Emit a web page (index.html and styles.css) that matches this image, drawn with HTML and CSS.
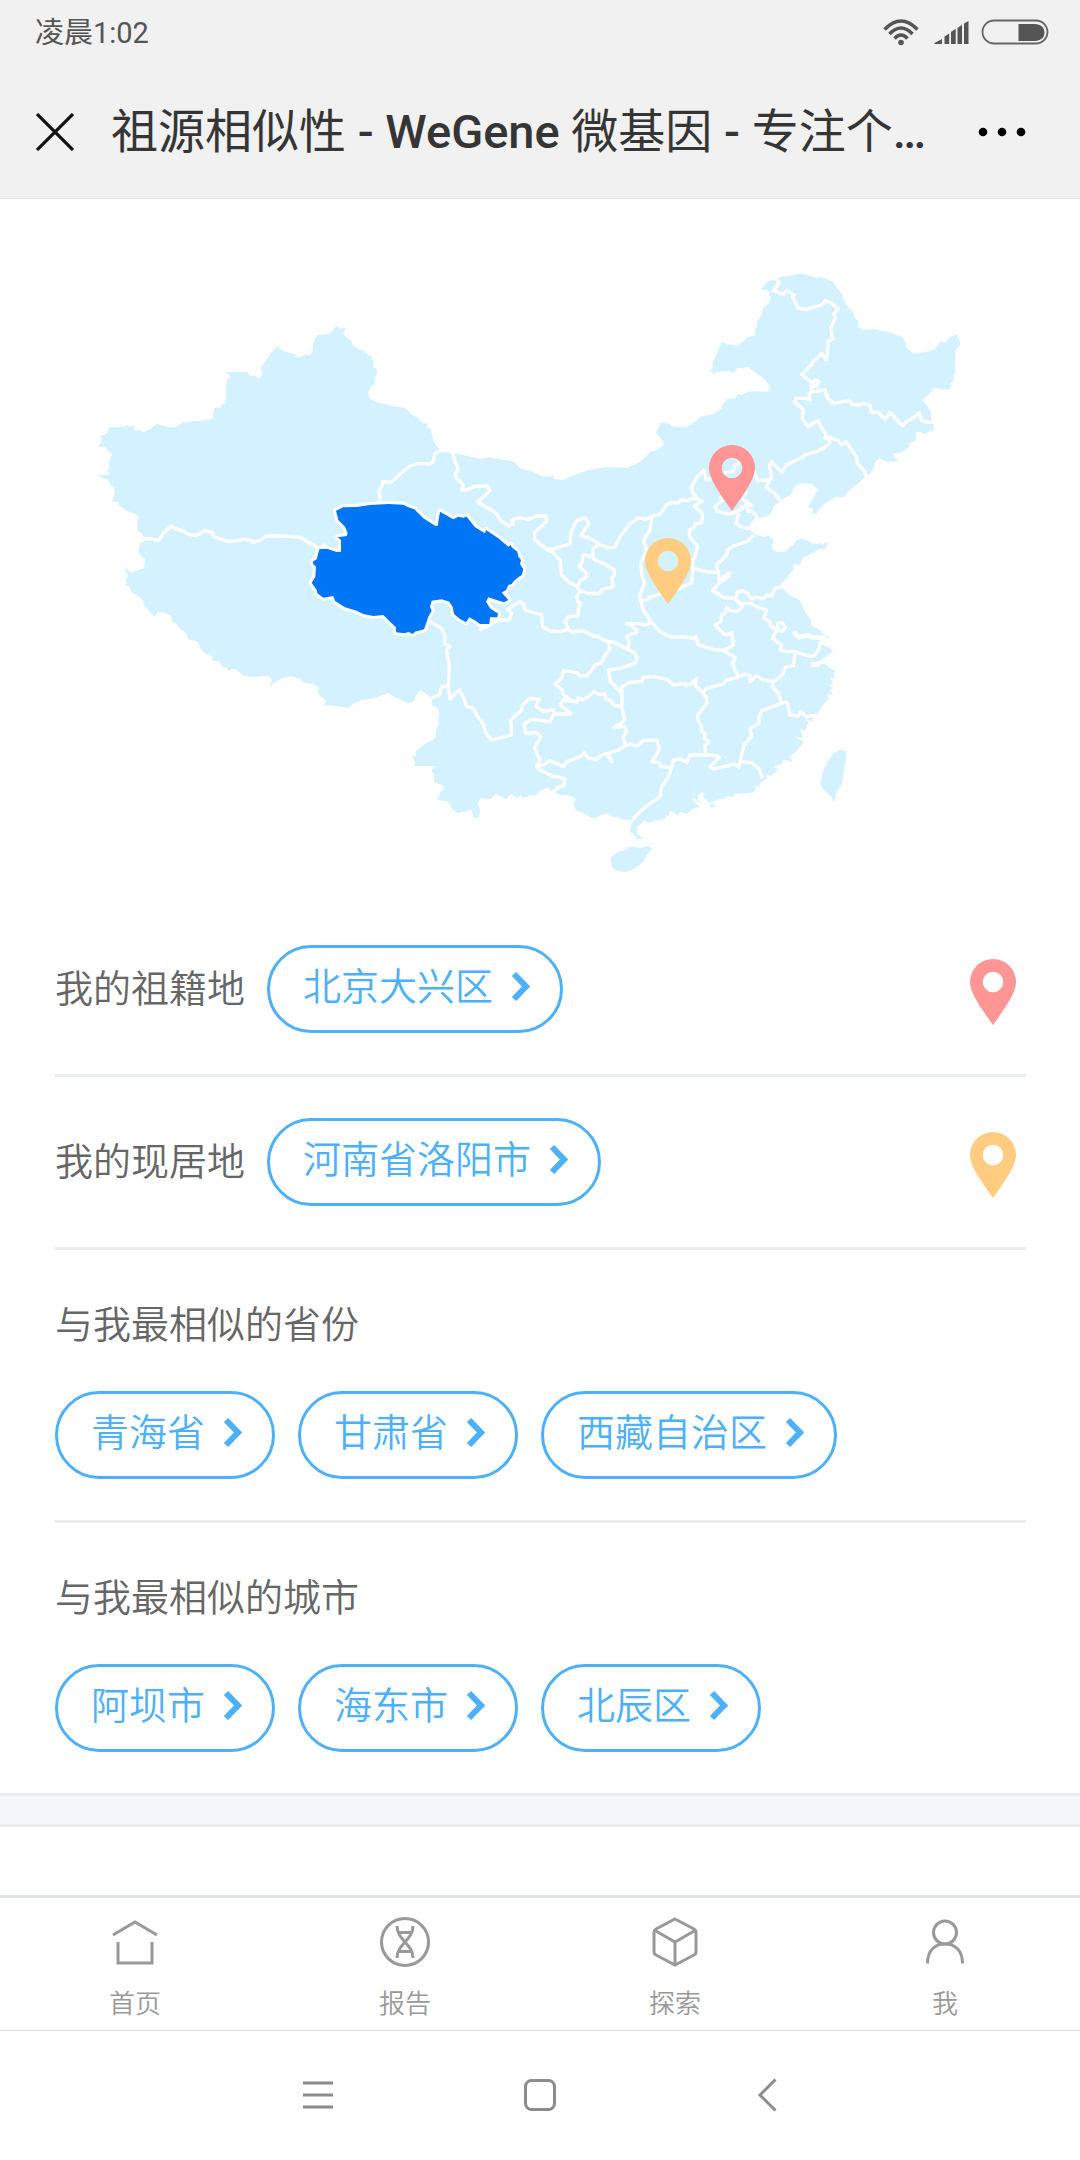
FILE: index.html
```html
<!DOCTYPE html>
<html lang="zh-CN">
<head>
<meta charset="utf-8">
<meta name="viewport" content="width=device-width, initial-scale=1">
<title>祖源相似性 - WeGene 微基因</title>
<link rel="stylesheet" href="styles.css">
</head>
<body>
<svg class="defs" width="0" height="0" aria-hidden="true">
  <symbol id="pin" viewBox="0 0 46 66"><path fill-rule="evenodd" d="M23 0A23 23 0 0 0 0 23C0 34 11 49 23 66C35 49 46 34 46 23A23 23 0 0 0 23 0ZM23 12.700a10.300 10.300 0 1 1 0 20.600a10.300 10.300 0 0 1 0-20.600Z"/></symbol>
  <symbol id="chevron" viewBox="0 0 19 32"><path d="M3 3L15 15.500L3 28" fill="none" stroke="currentColor" stroke-width="6"/></symbol>
</svg>

<header class="top">
  <div class="status">
    <span class="clock">凌晨1:02</span>
    <svg class="signals" width="166" height="28" viewBox="0 0 166 28" aria-hidden="true">
      <g fill="none" stroke="#555" stroke-width="3.600">
        <path d="M1.500 10.500Q18 -6.500 34.500 10.500"/><path d="M6.500 15Q18 3 29.500 15"/><path d="M11.500 19.500Q18 12.500 24.500 19.500"/>
      </g>
      <circle cx="18" cy="23.500" r="2.800" fill="#555"/>
      <path fill="#555" d="M51.500 25v-1l7.500-4v5ZM61.500 25V17.500l4.700-3V25ZM68 25v-12l4.700-3.200V25ZM74.500 25V9l4.500-3.200V25ZM81 25V4.500L85.500 2V25Z"/>
      <rect x="99.500" y="1.500" width="65" height="23" rx="11.500" fill="none" stroke="#666" stroke-width="1.800"/>
      <path fill="#555" d="M135.500 5H153q8.500 1 8.500 8.500T153 22H135.500Z"/>
    </svg>
  </div>
  <div class="titlebar">
    <button class="icon-btn" type="button" aria-label="关闭"><svg width="38" height="38" viewBox="0 0 38 38"><path d="M1 1L37 37M37 1L1 37" stroke="#111" stroke-width="3.200"/></svg></button>
    <h1 class="title">祖源相似性 <b>- WeGene</b> 微基因 <b>-</b> 专注个<b>…</b></h1>
    <button class="icon-btn" type="button" aria-label="更多"><svg width="48" height="12" viewBox="0 0 48 12"><circle cx="5" cy="6" r="4.300"/><circle cx="24" cy="6" r="4.300"/><circle cx="43" cy="6" r="4.300"/></svg></button>
  </div>
</header>

<main class="content">
  <svg class="map" viewBox="0 597 3240 2115" role="img" aria-label="中国地图">
    <g class="land">
      <path transform="translate(240 900)" d="M1080 450L1072 440L1060 425L1055 400L1050 385L1040 382L1043 372L1030 370L1010 352L992 342L985 332L975 325L950 320L930 318L915 312L890 307L880 300L870 298L865 278L872 262L884 252L884 235L891 222L889 208L880 200L880 180L872 168L860 162L850 150L835 148L818 135L815 125L795 108L790 100L796 84L778 85L768 78L760 88L755 97L745 103L715 105L705 115L700 130L697 158L690 165L675 165L660 171L648 172L645 163L625 158L605 150L590 138L572 160L555 185L540 207L549 215L543 230L533 234L525 226L510 228L502 216L450 216L434 215L443 222L453 230L443 238L437 260L438 285L435 312L420 314L428 321L402 325L398 355L385 360L375 358L370 362L340 364L305 370L285 382L265 381L230 371L210 388L190 397L183 392L163 390L162 376L150 380L138 376L135 380L100 382L88 382L82 398L75 405L62 407L65 422L56 440L75 442L96 463L88 480L87 505L82 512L90 522L80 525L52 524L65 532L85 540L92 555L102 562L104 580L97 605L115 606L118 618L140 632L165 642L177 650L172 660L172 692L185 700L192 714L193 725L180 730L175 755L180 765L195 778L192 805L175 810L155 818L145 812L140 802L135 810L144 828L137 840L140 850L135 856L147 858L155 878L175 888L192 905L190 912L222 950L235 935L262 942L275 950L275 962L290 972L300 987L318 998L327 1020L345 1022L357 1030L360 1045L378 1062L395 1066L400 1072L392 1082L418 1084L428 1103L440 1100L445 1113L455 1107L468 1108L490 1126L510 1131L550 1129L565 1127L576 1138L573 1150L565 1163L585 1147L605 1135L635 1128L660 1137L672 1148L700 1152L718 1163L712 1180L730 1195L738 1205L732 1216L765 1217L805 1224L820 1212L845 1200L880 1195L925 1179L950 1195L985 1210L1002 1202L1008 1185L1022 1170L1037 1180L1055 1192L1080 1190Z"/>
      <path transform="translate(1200 1260)" d="M62 810L80 822L95 835L97 856L115 865L117 880L115 915L108 930L107 950L100 960L80 968L60 985L45 995L50 1007L37 1010L45 1025L42 1038L105 1038L95 1052L102 1065L102 1085L115 1092L128 1095L133 1107L122 1115L118 1130L110 1140L135 1143L150 1150L152 1165L175 1180L185 1176L200 1174L215 1168L220 1193L237 1193L241 1170L232 1152L242 1135L272 1137L288 1122L300 1128L318 1137L325 1128L335 1122L350 1134L362 1125L370 1135L390 1126L405 1128L417 1115L445 1102L455 1112L480 1124L500 1126L520 1130L528 1138L520 1155L528 1170L550 1180L570 1192L590 1194L600 1186L625 1180L640 1192L655 1190L665 1198L690 1200L705 1195L693 1215L690 1235L700 1242L710 1258L727 1258L722 1250L710 1240L712 1220L725 1208L733 1200L745 1208L760 1203L800 1195L795 1185L805 1190L810 1172L828 1182L835 1186L840 1175L860 1182L870 1172L880 1165L900 1160L885 1148L875 1132L890 1140L902 1155L892 1130L905 1115L915 1122L908 1132L920 1138L925 1150L950 1140L975 1135L980 1128L1000 1130L1003 1122L1035 1120L1055 1118L1068 1108L1062 1095L1075 1092L1080 1080L1000 1000L1000 130L720 125L685 143L655 143L620 142L565 150L530 162L488 180L462 178L460 168L430 170L400 155L360 145L342 125L300 118L265 112L240 116L200 108L160 98L120 95L100 95L60 500ZM632 1312L660 1292L680 1290L685 1282L705 1280L720 1284L740 1278L757 1285L752 1292L740 1305L730 1325L705 1345L680 1357L650 1352L635 1342ZM922 1160L935 1152L950 1160Z"/>
      <path transform="translate(1680 1620)" d="M500 600L540 700L580 755L585 745L575 733L600 740L598 732L615 716L622 720L618 704L632 708L655 690L640 680L665 672L668 660L685 662L692 667L698 660L688 648L710 632L732 605L705 592L728 594L725 580L720 565L735 572L745 547L735 535L755 545L760 530L772 520L785 500L802 480L740 491L788 486L805 478L802 462L820 465L808 452L820 445L805 435L820 432L810 412L827 416L820 405L827 392L810 385L800 375L775 370L790 355L820 335L805 322L782 312L780 300L790 296L810 292L785 280L780 270L755 258L752 240L735 215L718 180L690 165L667 145L662 130L680 115L690 100L700 88L697 75L720 70L725 50L740 42L765 35L775 28L800 22L803 10L745 20L690 45L650 60L500 60ZM845 628L850 634L860 632L858 658L852 690L847 730L830 755L822 787L815 770L795 755L782 735L785 705L800 670L820 640Z"/>
      <path transform="translate(1920 750)" d="M563 882L552 879L545 885L540 878L533 883L515 880L505 872L485 866L470 870L460 885L448 892L440 903L420 907L402 903L395 890L400 870L388 858L370 860L345 853L327 838L330 822L342 808L350 800L365 803L390 795L397 780L402 768L418 755L437 742L452 735L460 715L475 702L500 698L505 703L512 698L535 718L525 735L515 752L503 772L520 775L515 790L528 792L535 780L550 765L580 745L590 740L612 740L625 725L640 710L655 700L668 688L680 678L692 668L700 655L705 638L718 625L740 635L778 634L762 620L760 610L775 610L795 600L808 590L810 578L827 572L828 546L842 545L852 553L865 545L880 542L882 521L875 515L873 490L860 465L848 450L868 432L880 415L905 418L932 418L932 400L940 395L940 380L945 370L945 345L947 300L962 285L955 265L950 255L935 258L918 275L900 277L885 298L860 305L820 311L797 290L800 280L785 260L775 258L745 245L720 243L705 237L670 240L655 230L655 212L645 205L640 190L620 165L608 145L605 130L590 115L580 95L555 85L540 80L532 85L510 77L490 72L470 72L450 77L425 80L410 88L385 93L375 103L362 118L385 122L392 145L387 158L370 175L362 200L350 215L352 230L345 235L347 255L322 262L305 278L290 288L262 283L245 277L230 310L218 340L218 355L210 360L220 372L232 365L268 362L278 370L292 355L325 352L345 365L370 385L388 405L390 418L380 426L345 423L320 427L305 435L292 433L287 445L262 447L247 465L245 475L220 493L180 500L165 515L138 532L100 530L82 518L62 520L48 548L70 575L72 585L50 600L30 607L0 637L-30 800L0 1000L420 1000L435 990L440 975L455 960L460 940L480 945L488 925L512 912L532 895L555 898Z"/>
    </g>
    <g class="borders">
      <path transform="translate(240 900)" d="M185 716L210 716L235 722L245 710L247 702L275 677L285 686L308 692L320 700L340 706L352 705L375 692L398 698L400 710L430 720L450 725L490 718L515 722L517 727L540 722L558 708L610 708L660 712L685 727L700 735L720 745L733 735L740 746M898 610L900 590L896 575L905 560L908 545L930 547L940 542L960 522L990 498L1015 490L1050 492L1060 485L1065 460L1085 450"/>
      <path transform="translate(1200 1260)" d="M157 96L165 122L175 150L165 162L170 175L190 195L185 210L200 210L220 200L262 198L270 212L250 232L232 245L255 260L270 268L290 282L300 300L325 317L340 312L335 300L360 293L385 298L410 288L437 286L440 303L425 318L405 335L403 358L440 388L465 385L510 372L513 335L530 302L555 293L567 310L543 347L580 360L600 375L622 383L645 382L660 350L690 312L715 293L735 298L760 288L780 282L800 255L815 247L835 249L842 240L862 242L875 235L892 237M440 388L460 398L480 420L485 465L505 485L533 500L540 483L560 470L558 458L538 440L545 430L550 405L578 410L580 385L600 372M578 412L585 420L610 430L643 450L643 465L635 475L640 500L605 508L600 520L565 520L540 512L530 500M540 515L530 530L533 545L543 550L535 565L535 588L505 590L495 605L505 628M262 620L245 625L238 632M268 612L300 600L328 600L335 580L322 568L360 545L372 555L375 570L425 585L428 620L450 633L480 635L505 628L515 636L550 632L580 648L595 650L615 662L645 668L683 688L705 700L712 715L705 730L680 738L660 745L625 750L630 782L665 820L665 860L640 855L635 845L618 835L615 822L600 824L580 815L565 830L545 840L535 833L528 848L505 835L490 825L485 808L465 792L485 775L490 752L530 758L540 768L560 768L575 750L585 735L605 728L612 710L632 685L620 662M683 688L688 670L680 650L690 643L710 638L712 630L698 622L695 615L680 612L715 610L735 615L755 608M755 293L750 330L730 360L740 390L722 430L726 465L733 490L718 530L730 570L755 608L780 635L815 652L845 650L885 655L888 650L895 675L912 680L940 688L975 692M718 542L740 540L750 532L780 522L840 505L875 488L880 445M892 237L907 243L883 258L905 278L908 290L905 308L885 312L880 325L868 330L868 350L893 380L885 410L878 420L880 445L920 455L955 458L950 435L980 405L983 390L1000 378L1040 365L1062 345M955 458L957 480L990 458L988 468L955 492L937 512L970 533L1010 535M892 237L880 220L873 205L888 175L912 150L918 178L935 177L955 172L975 158L1000 155L1005 135L1030 125L1050 135L1065 160L1072 182L1110 180M675 978L655 990L640 995L625 1000L635 1025L620 1000L605 1005L590 1018L565 1015L553 998L540 1010L500 1025L490 1040L450 1022L430 1035L410 1040L420 1050L440 1060L455 1068L495 1075L492 1098L478 1100L460 1114M410 1040L420 1020L403 985L423 950L410 937L378 940L372 912L395 898L450 905L462 882L513 882L500 870L480 855L490 840L535 848M90 605L125 625L135 650L133 670L150 680L140 690L148 740L145 800L150 838L165 820L178 810L190 830L200 860L220 865L230 885L250 912L258 940L275 960L335 945L332 900L365 870L368 855L388 835L418 838L408 858L430 875L460 868L462 882M145 800L125 800L118 825L95 834"/>
      <path transform="translate(1680 1620)" d="M460 150L490 172L520 175L545 190L570 190L600 205L620 210L612 235L630 245L632 258L655 272L652 250L665 248L677 262L668 274L650 270L638 295L665 315L660 330L680 335L705 335L735 345L755 350L768 342L778 325L780 305M530 175L530 158L545 152L560 158L575 177L585 172L610 175L620 165L635 168L645 145L665 140M525 178L548 200L530 215L510 212L500 202L495 220L485 225L482 245L465 255L490 280L498 285L515 278L520 315L490 332L525 352L518 372L535 410M428 458L440 445L490 432L500 420L535 412L555 402L570 407L570 425L590 407L610 420L640 425L668 405L675 382L700 377L705 342M640 425L637 440L655 460L665 488L640 500L605 512L597 530L597 550L570 565L575 590L552 615L540 665M665 488L682 487L690 525L715 528L722 515L740 530L770 525M428 458L440 475L440 490L425 510L413 525L413 540L425 560L425 575L435 580L433 595L448 605L435 615L437 645M185 460L185 440L210 427L245 425L250 412L280 410L320 418L340 435L375 430L378 438L395 430L410 415L405 435L428 458M185 460L185 500L190 520L193 540L180 552L162 562L195 560L200 575L190 590L195 618L210 612L230 618L250 602L290 600L298 625L292 640L275 665L300 668L302 680L335 682L340 660L360 657L380 667L390 645L437 645L460 645L478 652L450 680L460 687L500 678L525 672L537 682L540 665L575 668L600 690L607 715M335 682L325 710L305 740L300 770L265 795L240 815L218 837"/>
      <path class="coast" transform="translate(1680 1620)" d="M700 275L710 285L718 292L745 285L755 292L800 294M752 374L775 373L778 365"/>
      <path transform="translate(1920 750)" d="M406 86L418 98L400 122L430 133L440 122L462 135L458 142L475 175L500 178L520 172L545 165L555 152L575 160L595 177L582 190L585 205L572 235L578 268L565 272L560 330L545 310L520 335L512 347L485 373L495 382L520 400L525 390L536 395L530 408L512 408L515 425L555 420L563 445L580 460L630 452L635 462L655 465L670 460L690 465L695 487L715 487L735 508L750 487L787 527L800 515L825 500L838 488L845 512L865 518L882 516M515 425L507 432L510 450L495 445L468 445L463 457L490 478L487 505L503 530L533 512L558 555L555 565L570 562L595 572L605 585L618 575L650 622L652 640L675 665L677 680M570 562L568 582L545 598L530 605L500 612L490 620L470 630L440 645L425 668L395 635L388 645L395 680L378 712L405 730L420 752M350 692L388 690M240 738L250 750L225 768L232 785L270 792L300 780L310 772L300 768M305 745L335 765L312 765M305 740L322 724M290 780L295 795L288 820L305 832L328 836M320 760L325 785L335 783L352 800"/>
    </g>
    <path class="home-province" transform="translate(1200 1260)" d="M-192 272L-170 262L-130 261L-90 255L-35 252L10 254L25 262L43 268L70 295L105 317L113 317L120 275L160 298L175 290L190 293L200 290L225 322L255 340L258 330L295 355L325 380L332 375L335 382L352 395L355 410L363 420L360 432L370 448L365 465L355 472L342 482L335 492L325 495L318 510L305 518L318 532L325 540L312 547L290 540L265 532L258 545L270 565L285 575L294 580L292 592L270 592L268 612L240 612L228 603L208 592L198 607L180 597L162 582L158 560L148 545L125 538L95 542L90 560L95 572L85 590L80 605L72 628L45 635L38 642L25 635L15 640L-12 637L-12 622L-30 605L-50 585L-80 588L-110 582L-130 572L-165 562L-195 543L-200 528L-230 533L-248 520L-250 510L-265 488L-254 470L-252 440L-260 432L-262 425L-250 418L-242 388L-220 386L-190 396L-177 395L-177 360L-187 352L-160 348L-157 340L-165 320L-185 300Z"/>
    <use class="pin-red" href="#pin" x="2127" y="1335" width="138" height="198"/>
    <use class="pin-yellow" href="#pin" x="1935" y="1614" width="138" height="198"/>
  </svg>

  <section class="row place">
    <span class="label">我的祖籍地</span>
    <button class="pill" type="button">北京大兴区<svg class="arrow"><use href="#chevron"/></svg></button>
    <svg class="pin pin-red" aria-hidden="true"><use href="#pin"/></svg>
  </section>
  <section class="row place">
    <span class="label">我的现居地</span>
    <button class="pill" type="button">河南省洛阳市<svg class="arrow"><use href="#chevron"/></svg></button>
    <svg class="pin pin-yellow" aria-hidden="true"><use href="#pin"/></svg>
  </section>
  <section class="row similar">
    <h2 class="label">与我最相似的省份</h2>
    <div class="pills">
      <button class="pill" type="button">青海省<svg class="arrow"><use href="#chevron"/></svg></button>
      <button class="pill" type="button">甘肃省<svg class="arrow"><use href="#chevron"/></svg></button>
      <button class="pill" type="button">西藏自治区<svg class="arrow"><use href="#chevron"/></svg></button>
    </div>
  </section>
  <section class="row similar">
    <h2 class="label">与我最相似的城市</h2>
    <div class="pills">
      <button class="pill" type="button">阿坝市<svg class="arrow"><use href="#chevron"/></svg></button>
      <button class="pill" type="button">海东市<svg class="arrow"><use href="#chevron"/></svg></button>
      <button class="pill" type="button">北辰区<svg class="arrow"><use href="#chevron"/></svg></button>
    </div>
  </section>
  <div class="band"></div>
</main>

<nav class="tabs">
  <a class="tab" href="#home"><svg width="52" height="52" viewBox="0 0 52 52"><path d="M4 19L26 6L48 19M9 26V47H43V26"/></svg>首页</a>
  <a class="tab" href="#report"><svg width="52" height="52" viewBox="0 0 52 52"><circle cx="26" cy="26" r="23.500"/><path d="M18 10C18 24 34 28 34 42M34 10C34 24 18 28 18 42M19 16.500H33M19 35.500H33"/></svg>报告</a>
  <a class="tab" href="#explore"><svg width="52" height="52" viewBox="0 0 52 52"><path d="M26 3L45 13Q47 14 47 16V36Q47 38 45 39L26 49L7 39Q5 38 5 36V16Q5 14 7 13ZM6 14.500L26 26L46 14.500M26 26V49"/></svg>探索</a>
  <a class="tab" href="#me"><svg width="52" height="52" viewBox="0 0 52 52"><circle cx="26" cy="16.500" r="11.500"/><path d="M8.500 47.500C8.500 34 16 28 26 28S43.500 34 43.500 47.500"/></svg>我</a>
</nav>
<nav class="system">
  <button class="sys" type="button" aria-label="菜单"><svg width="34" height="34" viewBox="0 0 34 34"><path d="M2 5H32M2 17H32M2 29H32"/></svg></button>
  <button class="sys" type="button" aria-label="主屏幕"><svg width="34" height="34" viewBox="0 0 34 34"><rect x="2.500" y="2.500" width="29" height="29" rx="6"/></svg></button>
  <button class="sys" type="button" aria-label="返回"><svg width="34" height="34" viewBox="0 0 34 34"><path d="M30.500 1.500L15 17L30.500 32.500"/></svg></button>
</nav>
</body>
</html>
```
FILE: styles.css
```css
* {
  box-sizing: border-box;
}

body {
  margin: 0;
  min-height: 100vh;
  display: flex;
  flex-direction: column;
  background: #fff;
  color: #666;
  font-family: Roboto, "Noto Sans CJK SC", sans-serif;
}

button {
  margin: 0;
  padding: 0;
  border: 0;
  background: none;
  font: inherit;
  cursor: pointer;
}

svg {
  display: block;
  flex: none;
}

.defs {
  position: absolute;
}

.top {
  background: #f1f1f1;
  border-bottom: 1px solid #dedede;
}

.status {
  display: flex;
  align-items: center;
  justify-content: space-between;
  height: 66px;
  padding: 0 31px 0 35px;
  color: #555;
}

.clock {
  font-size: 29px;
  line-height: 32px;
}

.titlebar {
  display: flex;
  align-items: center;
  height: 132px;
  padding: 0 54px 0 36px;
}

.title {
  flex: 1;
  margin: 0 16px 0 37px;
  overflow: hidden;
  white-space: nowrap;
  color: #353535;
  font-size: 47px;
  font-weight: 400;
  line-height: 64px;
}

.title b {
  font-weight: 500;
}

.content {
  flex: 1;
}

.map {
  width: 100%;
  height: auto;
}

.land {
  fill: #d3f1ff;
}

.borders {
  fill: none;
  stroke: #fff;
  stroke-width: 10;
  stroke-linejoin: round;
}

.coast {
  stroke-width: 14;
}

.home-province {
  fill: #0076f6;
  stroke: #fff;
  stroke-width: 18;
  stroke-linejoin: round;
  paint-order: stroke;
}

.pin-red {
  fill: #ff9595;
}

.pin-yellow {
  fill: #ffcc80;
}

.row {
  margin: 0 54px 0 55px;
  padding-bottom: 41px;
  border-bottom: 3px solid #ebeef1;
}

.place {
  display: flex;
  align-items: center;
  gap: 22px;
  padding-top: 41px;
}

.label {
  margin: 0;
  font-size: 38px;
  font-weight: 350;
  line-height: 48px;
}

.similar {
  padding-top: 51px;
}

.similar:nth-last-child(2) {
  border-bottom: 0;
}

.pills {
  display: flex;
  flex-wrap: wrap;
  gap: 23px;
  margin-top: 42px;
}

.pill {
  display: flex;
  align-items: center;
  gap: 18px;
  height: 88px;
  padding: 0 30px 4px 33px;
  border: 3px solid #4db0fb;
  border-radius: 44px;
  color: #4db0fb;
  font-size: 38px;
  font-weight: 350;
  line-height: 48px;
}

.arrow {
  width: 19px;
  height: 32px;
}

.pin {
  width: 46px;
  height: 66px;
  margin: 6px 10px 0 auto;
}

.band {
  height: 34px;
  border: solid #e9edf0;
  border-width: 3px 0;
  background: #f3f6fa;
}

.tabs {
  display: grid;
  grid-template-columns: repeat(4, 1fr);
  height: 135px;
  padding-top: 18px;
  border-top: 3px solid #e0e6e4;
}

.tab {
  display: flex;
  flex-direction: column;
  align-items: center;
  gap: 18px;
  color: #999;
  font-size: 26px;
  font-weight: 350;
  line-height: 36px;
  text-decoration: none;
}

.tab svg,
.sys svg {
  fill: none;
  stroke: #999;
  stroke-width: 3;
}

.system {
  display: flex;
  align-items: center;
  justify-content: center;
  gap: 188px;
  height: 130px;
  padding-bottom: 2px;
  border-top: 1px solid #dedede;
}

.sys svg {
  stroke: #8c8c8c;
}
```
